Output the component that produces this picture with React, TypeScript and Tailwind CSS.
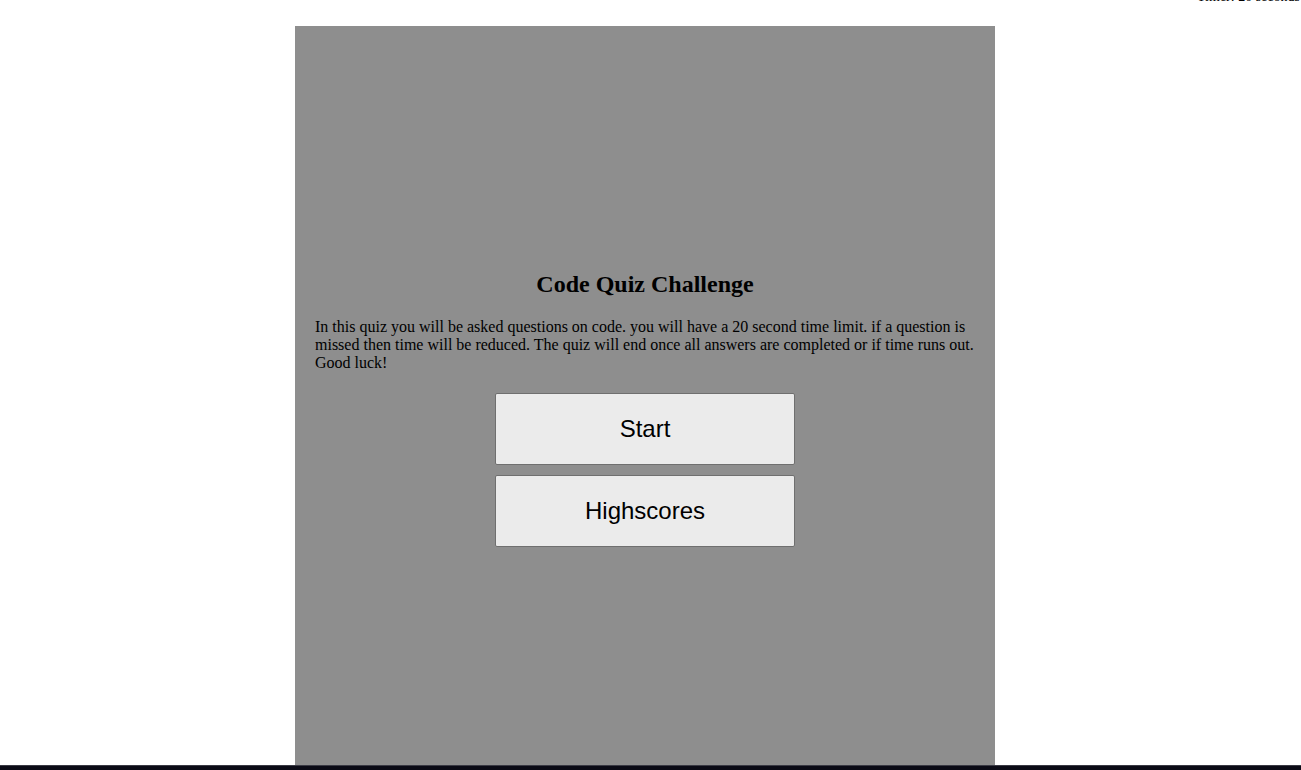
const serif = { fontFamily: '"Liberation Serif", "Times New Roman", serif' };

const QuizButton = ({ label }: { label: string }) => (
  <button
    className="h-[72px] w-[300px] cursor-pointer rounded-[2px] border border-[#6f6f6f] bg-[#ebebeb] text-[24px] text-black"
    style={{ fontFamily: '"Liberation Sans", Arial, sans-serif' }}
  >
    {label}
  </button>
);

const App = () => {
  return (
    <div className="flex h-[770px] flex-col overflow-hidden bg-white" style={serif}>
      <div className="h-[26px] text-right">
        <p className="-mt-[11px] pr-[1px] text-[14px] leading-[16px] text-black">
          Timer: 20 seconds
        </p>
      </div>
      <div className="ml-[295px] flex h-[739px] w-[700px] shrink-0 flex-col bg-[#8e8e8e] px-5 pt-[245px]">
        <h2 className="text-center text-[24px] leading-[27px] font-bold text-black">
          Code Quiz Challenge
        </h2>
        <p className="mt-[20px] text-[16px] leading-[18px] text-black">
          In this quiz you will be asked questions on code. you will have a 20
          second time limit. if a question is missed then time will be reduced.
          The quiz will end once all answers are completed or if time runs out.
          Good luck!
        </p>
        <div className="mt-[21px] flex flex-col items-center gap-[10px]">
          <QuizButton label="Start" />
          <QuizButton label="Highscores" />
        </div>
      </div>
      <div className="h-[5px] w-full shrink-0 border-t border-[#3a3a44] bg-[#0b0b16]" />
    </div>
  );
};

export default App;
